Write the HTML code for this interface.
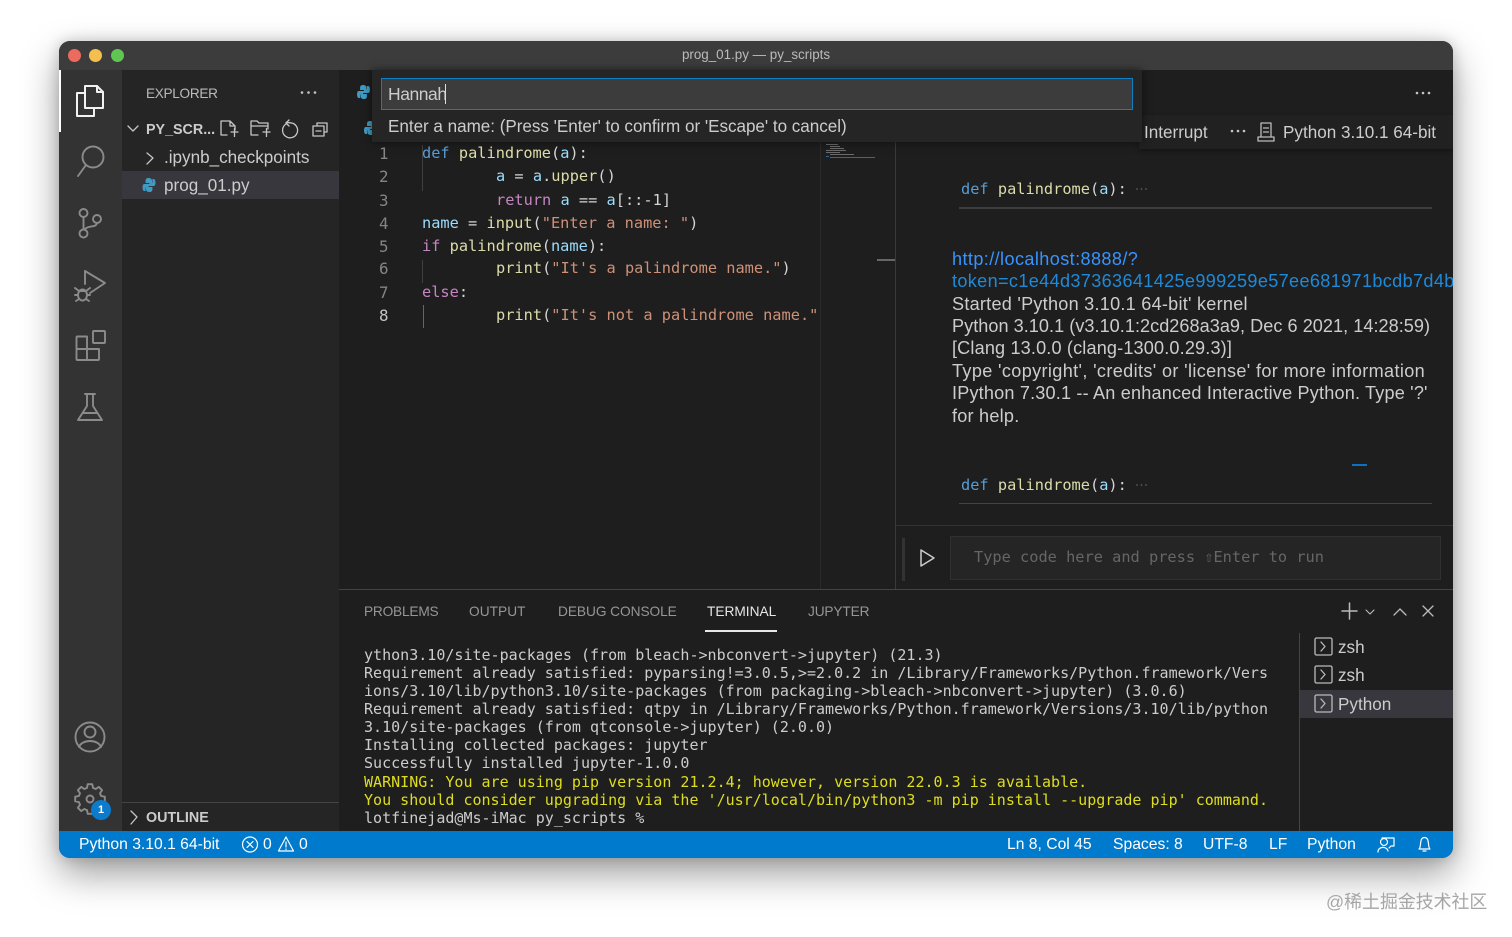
<!DOCTYPE html>
<html><head><meta charset="utf-8"><style>
html,body{margin:0;padding:0;width:1512px;height:937px;overflow:hidden;background:#fff}
body{filter:blur(.3px)}
*{box-sizing:border-box}
.a{position:absolute}
.t{position:absolute;white-space:pre;font-family:"Liberation Sans",sans-serif;color:#ccc;line-height:22px}
.m{position:absolute;white-space:pre;font-family:"DejaVu Sans Mono","Liberation Mono",monospace;font-size:15.3px;line-height:23px;color:#d4d4d4}
.tm{position:absolute;left:364px;white-space:pre;font-family:"DejaVu Sans Mono","Liberation Mono",monospace;font-size:15.02px;line-height:18px;color:#ccc}
.k{color:#569cd6}.f{color:#dcdcaa}.v{color:#9cdcfe}.c{color:#c586c0}.s{color:#ce9178}
svg{position:absolute;overflow:visible;fill:none}
#win{position:absolute;left:59px;top:41px;width:1394px;height:817px;border-radius:11px;background:#1e1e1e;box-shadow:0 16px 38px rgba(0,0,0,.38),0 0 14px rgba(0,0,0,.18)}
</style></head><body>
<div id="win"></div>
<div class="a" style="left:59px;top:41px;width:1394px;height:817px;border-radius:11px;overflow:hidden">
 <div class="a" style="left:0;top:0;width:1394px;height:29px;background:#3c3c3c"></div>
 <div class="a" style="left:0;top:29px;width:63px;height:761px;background:#333"></div>
 <div class="a" style="left:0;top:29px;width:2px;height:62px;background:#fff"></div>
 <div class="a" style="left:63px;top:29px;width:217px;height:761px;background:#252526"></div>
 <div class="a" style="left:63px;top:130px;width:217px;height:28px;background:#37373d"></div>
 <div class="a" style="left:63px;top:761px;width:217px;height:1px;background:#444"></div>
 <div class="a" style="left:0;top:790px;width:1394px;height:27px;background:#007acc"></div>
 <div class="a" style="left:280px;top:29px;width:1114px;height:79px;background:#1e1e1e"></div>
 <div class="a" style="left:1080px;top:74px;width:314px;height:34px;background:#212121;box-shadow:0 2px 5px rgba(0,0,0,.35)"></div>
 <div class="a" style="left:761px;top:100px;width:58px;height:448px;background:#1e1e1e;border-left:1px solid #2a2a2a"></div>
 <div class="a" style="left:836px;top:100px;width:1px;height:448px;background:#3a3a3a"></div>
 <div class="a" style="left:818px;top:218px;width:18px;height:2px;background:#666"></div>
 <div class="a" style="left:280px;top:548px;width:1114px;height:1px;background:#444"></div>
 <div class="a" style="left:837px;top:484px;width:557px;height:1px;background:#333"></div>
 <div class="a" style="left:900px;top:166px;width:473px;height:2px;background:#3e3e3e"></div>
 <div class="a" style="left:900px;top:462px;width:473px;height:1px;background:#444"></div>
 <div class="a" style="left:1293px;top:423px;width:15px;height:2px;background:#0e70c0"></div>
 <div class="a" style="left:843px;top:497px;width:3px;height:43px;background:#333"></div>
 <div class="a" style="left:891px;top:495px;width:491px;height:44px;background:#252526;border:1px solid #303030"></div>
 <div class="a" style="left:646px;top:589px;width:72px;height:2px;background:#e7e7e7"></div>
 <div class="a" style="left:1240px;top:592px;width:1px;height:198px;background:#444"></div>
 <div class="a" style="left:1241px;top:649px;width:153px;height:28px;background:#37373d"></div>
 <div class="a" style="left:363px;top:104px;width:1px;height:46px;background:#404040"></div>
 <div class="a" style="left:363px;top:219px;width:1px;height:23px;background:#404040"></div>
 <div class="a" style="left:364px;top:264px;width:1px;height:23px;background:#666"></div>
</div>

<div class="a" style="left:68px;top:49px;width:13px;height:13px;border-radius:50%;background:#ed6a5e"></div>
<div class="a" style="left:89px;top:49px;width:13px;height:13px;border-radius:50%;background:#f4bf4f"></div>
<div class="a" style="left:110.500px;top:49px;width:13px;height:13px;border-radius:50%;background:#61c554"></div>
<div class="t" style="left:0;width:1512px;text-align:center;top:44px;font-size:13.4px;color:#bbb">prog_01.py — py_scripts</div>

<!-- minimap -->
<svg style="left:0;top:0" width="1512" height="937" stroke-width="1">
 <g stroke="#6b6b6b"><path d="M826 144.500h12M830 146.500h10M830 148.500h14M826 150.500h20M826 152.500h14M830 154.500h24"/></g>
 <path d="M826 156.500h3M830 157.500h45" stroke="#2a6d9c"/>
</svg>

<!-- icons -->
<svg style="left:0;top:0" width="1512" height="937" stroke="#8b8b8b" stroke-width="1.9" stroke-linejoin="round" stroke-linecap="round">
 <g stroke="#f2f2f2" stroke-width="2"><path d="M85 108V86h12l6 6v16z"/><path d="M97 86v6h6"/><path d="M85 93h-8v23h17v-8"/></g>
 <circle cx="93" cy="157" r="10.500"/><path d="M86 165l-8 11"/>
 <circle cx="83.500" cy="213" r="4"/><circle cx="97" cy="219" r="4"/><circle cx="83.500" cy="233.500" r="4"/><path d="M83.500 217v12.500M85 229c4-4 11-1 12-6"/>
 <path d="M85 271l20 12-15 10M85 271v13"/>
 <ellipse cx="82.500" cy="295" rx="4.500" ry="5.500"/><path d="M75 288l4 3M75 295h3M76 301l3-2M90 288l-4 3M90 295h-3M89 301l-3-2M79 291h7"/>
 <path d="M76.500 337.500a1 1 0 0 1 1-1H87v12.500h12v10a1 1 0 0 1-1 1H77.500a1 1 0 0 1-1-1zM76.500 349H87v11"/><rect x="93" y="331" width="12" height="12" rx="1"/>
 <path d="M85 394h10M87 394v12l-9 14h24l-9-14v-12M83 413h14"/>
 <circle cx="90" cy="737" r="14.500"/><circle cx="90" cy="732" r="5.500"/><path d="M79 747c3-8 19-8 22 0"/>
 <path transform="translate(90 799)" d="M11.100-3L14.800-2.300V2.300L11.100 3L10 5.750L12.100 8.800L8.800 12.100L5.750 10L3 11.100L2.300 14.800H-2.300L-3 11.100L-5.750 10L-8.800 12.100L-12.100 8.800L-10 5.750L-11.100 3L-14.800 2.300V-2.300L-11.100-3L-10-5.750L-12.100-8.800L-8.800-12.100L-5.750-10L-3-11.100L-2.300-14.800H2.300L3-11.100L5.750-10L8.800-12.100L12.100-8.800L10-5.750z"/>
 <circle cx="90" cy="799" r="3.500"/>
 <g stroke-width="1.300" stroke="#c5c5c5">
 <path d="M128 126l5 5 5-5M147 153l6 5-6 6" stroke-width="1.300"/>
 <path d="M227 135h-6v-14h9l5 5v4M230 121v5h5M231 132h7M234.500 128.500v8"/>
 <path d="M258 135h-7v-14h6l2 2h9v6M252 126h15M263 132h7M266.500 128.500v8"/>
 <path d="M286 124a7.500 7.500 0 1 0 4.500-1.200l-4.500-.3M289 120l-3 3 3 3"/>
 <path d="M313 126h11v10h-11zM317 126v-3h10v9h-3M316 131h5"/>
 <path d="M131 811l6 6-6 7" stroke-width="1.300"/>
 </g>
 <g fill="#c5c5c5" stroke="none"><circle cx="302" cy="92.500" r="1.300"/><circle cx="308.500" cy="92.500" r="1.300"/><circle cx="315" cy="92.500" r="1.300"/>
 <circle cx="1417" cy="93" r="1.300"/><circle cx="1423" cy="93" r="1.300"/><circle cx="1429" cy="93" r="1.300"/>
 <circle cx="1232" cy="131" r="1.300"/><circle cx="1238" cy="131" r="1.300"/><circle cx="1244" cy="131" r="1.300"/></g>
 <g fill="#6a6a6a" stroke="none"><circle cx="1137" cy="189" r=".8"/><circle cx="1141.500" cy="189" r=".8"/><circle cx="1146" cy="189" r=".8"/>
 <circle cx="1137" cy="485" r=".8"/><circle cx="1141.500" cy="485" r=".8"/><circle cx="1146" cy="485" r=".8"/></g>
 <g stroke="#bbb" stroke-width="1.300"><path d="M1261 123h10v14h-10zM1258 137h16v4h-16zM1263.500 128h5M1263.500 132h5"/>
 <path d="M921 550l13 8-13 8z" stroke="#ccc" stroke-width="1.500"/>
 <path d="M1342 611h15M1349.500 603v16" stroke-width="1.500"/><path d="M1366 610l4 4 4-4" stroke-width="1.100"/><path d="M1394 615l6-6 6 6"/><path d="M1423 606l10 10M1433 606l-10 10"/>
 <rect x="1315" y="638" width="17" height="17" rx="1.500"/><path d="M1321 642l4 4.500-4 4.500"/>
 <rect x="1315" y="666" width="17" height="17" rx="1.500"/><path d="M1321 670l4 4.500-4 4.500"/>
 <rect x="1315" y="695" width="17" height="17" rx="1.500"/><path d="M1321 699l4 4.500-4 4.500"/></g>
 <g stroke="#fff" stroke-width="1.200"><circle cx="250" cy="844.500" r="7.500"/><path d="M247 841.500l6 6M253 841.500l-6 6"/><path d="M286 837l7.500 14h-15zM286 842v5M286 849v.5"/>
 <circle cx="1384" cy="842" r="3.500"/><path d="M1378 852c0-6 9-6 10-1M1382 838h12v8h-3l-2 2"/><path d="M1419 849c2-2 1-5 2-8a3.500 3.500 0 0 1 7 0c1 3 0 6 2 8zM1423 851h3"/></g>
</svg>
<div class="a" style="left:91px;top:800px;width:20px;height:20px;border-radius:50%;background:#0b7bcd;color:#fff;font:bold 11px/20px 'Liberation Sans',sans-serif;text-align:center">1</div>

<!-- python file icons -->
<svg style="left:0;top:0" width="1512" height="937" stroke="none">
 <g fill="#3f9bc4">
  <g transform="translate(363.500 92) scale(.76 1) translate(-363.500 -92)">
  <path d="M363 85c-3 0-4 1-4 3v2h5v1h-7c-1.500 0-2 2-2 3.500s.7 3.500 2 3.500h2v-2.500c0-1.500 1-2.500 2.500-2.500h4c1 0 2-1 2-2v-3c0-2-2-3-4.500-3z"/>
  <path d="M364 99c3 0 4-1 4-3v-2h-5v-1h7c1.500 0 2-2 2-3.500s-.7-3.500-2-3.500h-2v2.500c0 1.500-1 2.500-2.500 2.500h-4c-1 0-2 1-2 2v3c0 2 2 3 4.500 3z"/>
  </g>
  <g transform="translate(7 36) translate(363.500 92) scale(.76 1) translate(-363.500 -92)">
  <path d="M363 85c-3 0-4 1-4 3v2h5v1h-7c-1.500 0-2 2-2 3.500s.7 3.500 2 3.500h2v-2.500c0-1.500 1-2.500 2.500-2.500h4c1 0 2-1 2-2v-3c0-2-2-3-4.500-3z"/>
  <path d="M364 99c3 0 4-1 4-3v-2h-5v-1h7c1.500 0 2-2 2-3.500s-.7-3.500-2-3.500h-2v2.500c0 1.500-1 2.500-2.500 2.500h-4c-1 0-2 1-2 2v3c0 2 2 3 4.500 3z"/>
  </g>
  <g transform="translate(149 185) scale(.76 1) translate(-149.500 -185)">
  <path d="M149 178c-3 0-4 1-4 3v2h5v1h-7c-1.500 0-2 2-2 3.500s.7 3.500 2 3.500h2v-2.500c0-1.500 1-2.500 2.500-2.500h4c1 0 2-1 2-2v-3c0-2-2-3-4.500-3z"/>
  <path d="M150 192c3 0 4-1 4-3v-2h-5v-1h7c1.500 0 2-2 2-3.500s-.7-3.500-2-3.500h-2v2.500c0 1.500-1 2.500-2.500 2.500h-4c-1 0-2 1-2 2v3c0 2 2 3 4.500 3z"/>
  </g>
 </g>
</svg>

<!-- sidebar text -->
<div class="t" style="left:146px;top:83px;font-size:13.6px;letter-spacing:-.3px;color:#bbb">EXPLORER</div>
<div class="t" style="left:146px;top:119px;font-size:14.3px;font-weight:bold;color:#ccc">PY_SCR...</div>
<div class="t" style="left:164px;top:147px;font-size:17.100px;color:#ccc">.ipynb_checkpoints</div>
<div class="t" style="left:164px;top:175px;font-size:17.100px;color:#ccc">prog_01.py</div>
<div class="t" style="left:146px;top:807px;font-size:14.300px;font-weight:bold;color:#ccc">OUTLINE</div>

<!-- quick input -->
<div class="a" style="left:372px;top:70px;width:770px;height:72px;background:#252526;box-shadow:0 0 8px rgba(0,0,0,.55)"></div>
<div class="a" style="left:381px;top:78px;width:752px;height:32px;background:#3c3c3c;border:1px solid #0f7fc4"></div>
<div class="t" style="left:388px;top:83px;font-size:17.500px;letter-spacing:-.45px;color:#ccc">Hannah</div>
<div class="a" style="left:445px;top:84px;width:1px;height:20px;background:#ddd"></div>
<div class="t" style="left:388px;top:116px;font-size:17.100px;letter-spacing:-.03px;color:#ccc">Enter a name: (Press 'Enter' to confirm or 'Escape' to cancel)</div>

<div class="t" style="left:1144px;top:122px;font-size:17.100px;color:#ccc">Interrupt</div>
<div class="t" style="left:1283px;top:122px;font-size:17.100px;color:#ccc">Python 3.10.1 64-bit</div>

<!-- line numbers -->
<div class="m" style="left:379px;top:142px;color:#858585;font-size:15.800px">1</div>
<div class="m" style="left:379px;top:165px;color:#858585;font-size:15.800px">2</div>
<div class="m" style="left:379px;top:188.500px;color:#858585;font-size:15.800px">3</div>
<div class="m" style="left:379px;top:211.500px;color:#858585;font-size:15.800px">4</div>
<div class="m" style="left:379px;top:234.500px;color:#858585;font-size:15.800px">5</div>
<div class="m" style="left:379px;top:257px;color:#858585;font-size:15.800px">6</div>
<div class="m" style="left:379px;top:280.500px;color:#858585;font-size:15.800px">7</div>
<div class="m" style="left:379px;top:303.500px;color:#c6c6c6;font-size:15.800px">8</div>

<!-- code -->
<div class="m" style="left:422px;top:142px"><span class="k">def</span> <span class="f">palindrome</span>(<span class="v">a</span>):</div>
<div class="m" style="left:496px;top:165px"><span class="v">a</span> = <span class="v">a</span>.<span class="f">upper</span>()</div>
<div class="m" style="left:496px;top:188.500px"><span class="c">return</span> <span class="v">a</span> == <span class="v">a</span>[::-1]</div>
<div class="m" style="left:422px;top:211.500px"><span class="v">name</span> = <span class="f">input</span>(<span class="s">"Enter a name: "</span>)</div>
<div class="m" style="left:422px;top:234.500px"><span class="c">if</span> <span class="f">palindrome</span>(<span class="v">name</span>):</div>
<div class="m" style="left:496px;top:257px"><span class="f">print</span>(<span class="s">"It's a palindrome name."</span>)</div>
<div class="m" style="left:422px;top:280.500px"><span class="c">else</span>:</div>
<div class="m" style="left:496px;top:303.500px;width:324px;overflow:hidden"><span class="f">print</span>(<span class="s">"It's not a palindrome name."</span></div>

<!-- interactive -->
<div class="m" style="left:961px;top:178px"><span class="k">def</span> <span class="f">palindrome</span>(<span class="v">a</span>):</div>
<div class="a" style="left:897px;top:240px;width:556px;height:190px;overflow:hidden">
<div class="t" style="left:55px;top:8px;font-size:18.100px;color:#3794ff;letter-spacing:.4px">http://localhost:8888/?</div>
<div class="t" style="left:55px;top:30px;font-size:18.100px;color:#1f8ad8;letter-spacing:.35px">token=c1e44d37363641425e999259e57ee681971bcdb7d4b</div>
<div class="t" style="left:55px;top:53px;font-size:18.100px;letter-spacing:.25px">Started 'Python 3.10.1 64-bit' kernel</div>
<div class="t" style="left:55px;top:75px;font-size:18.100px;letter-spacing:.04px">Python 3.10.1 (v3.10.1:2cd268a3a9, Dec 6 2021, 14:28:59)</div>
<div class="t" style="left:55px;top:97px;font-size:18.100px;letter-spacing:.16px">[Clang 13.0.0 (clang-1300.0.29.3)]</div>
<div class="t" style="left:55px;top:120px;font-size:18.100px;letter-spacing:.36px">Type 'copyright', 'credits' or 'license' for more information</div>
<div class="t" style="left:55px;top:142px;font-size:18.100px;letter-spacing:.18px">IPython 7.30.1 -- An enhanced Interactive Python. Type '?'</div>
<div class="t" style="left:55px;top:165px;font-size:18.100px;letter-spacing:.23px">for help.</div>
</div>
<div class="m" style="left:961px;top:474px"><span class="k">def</span> <span class="f">palindrome</span>(<span class="v">a</span>):</div>
<div class="m" style="left:974px;top:546px;color:#666">Type code here and press ⇧Enter to run</div>

<!-- panel -->
<div class="t" style="left:364px;top:601px;font-size:13.700px;letter-spacing:-.2px;color:#969696">PROBLEMS</div>
<div class="t" style="left:469px;top:601px;font-size:13.700px;letter-spacing:.05px;color:#969696">OUTPUT</div>
<div class="t" style="left:558px;top:601px;font-size:13.700px;letter-spacing:-.05px;color:#969696">DEBUG CONSOLE</div>
<div class="t" style="left:707px;top:601px;font-size:13.700px;letter-spacing:0;color:#e7e7e7">TERMINAL</div>
<div class="t" style="left:808px;top:601px;font-size:13.700px;letter-spacing:-.15px;color:#969696">JUPYTER</div>

<div class="tm" style="top:646px">ython3.10/site-packages (from bleach-&gt;nbconvert-&gt;jupyter) (21.3)</div>
<div class="tm" style="top:664px">Requirement already satisfied: pyparsing!=3.0.5,&gt;=2.0.2 in /Library/Frameworks/Python.framework/Vers</div>
<div class="tm" style="top:682px">ions/3.10/lib/python3.10/site-packages (from packaging-&gt;bleach-&gt;nbconvert-&gt;jupyter) (3.0.6)</div>
<div class="tm" style="top:700px">Requirement already satisfied: qtpy in /Library/Frameworks/Python.framework/Versions/3.10/lib/python</div>
<div class="tm" style="top:718px">3.10/site-packages (from qtconsole-&gt;jupyter) (2.0.0)</div>
<div class="tm" style="top:736px">Installing collected packages: jupyter</div>
<div class="tm" style="top:754px">Successfully installed jupyter-1.0.0</div>
<div class="tm" style="top:772.500px;color:#dede1e">WARNING: You are using pip version 21.2.4; however, version 22.0.3 is available.</div>
<div class="tm" style="top:790.500px;color:#dede1e">You should consider upgrading via the '/usr/local/bin/python3 -m pip install --upgrade pip' command.</div>
<div class="tm" style="top:808.500px">lotfinejad@Ms-iMac py_scripts %</div>

<div class="t" style="left:1338px;top:637px;font-size:17.100px">zsh</div>
<div class="t" style="left:1338px;top:665px;font-size:17.100px">zsh</div>
<div class="t" style="left:1338px;top:694px;font-size:17.100px">Python</div>

<!-- status bar -->
<div class="t" style="left:79px;top:834px;font-size:15.700px;color:#fff">Python 3.10.1 64-bit</div>
<div class="t" style="left:263px;top:834px;font-size:15.700px;color:#fff">0</div>
<div class="t" style="left:299px;top:834px;font-size:15.700px;color:#fff">0</div>
<div class="t" style="left:1007px;top:834px;font-size:15.700px;color:#fff">Ln 8, Col 45</div>
<div class="t" style="left:1113px;top:834px;font-size:15.700px;color:#fff">Spaces: 8</div>
<div class="t" style="left:1203px;top:834px;font-size:15.700px;color:#fff">UTF-8</div>
<div class="t" style="left:1269px;top:834px;font-size:15.700px;color:#fff">LF</div>
<div class="t" style="left:1307px;top:834px;font-size:15.700px;color:#fff">Python</div>

<div class="t" style="left:1326px;top:891px;font-size:17.900px;color:#a6a6a6;font-family:'Liberation Sans','Noto Sans CJK SC',sans-serif">@稀土掘金技术社区</div>
</body></html>
